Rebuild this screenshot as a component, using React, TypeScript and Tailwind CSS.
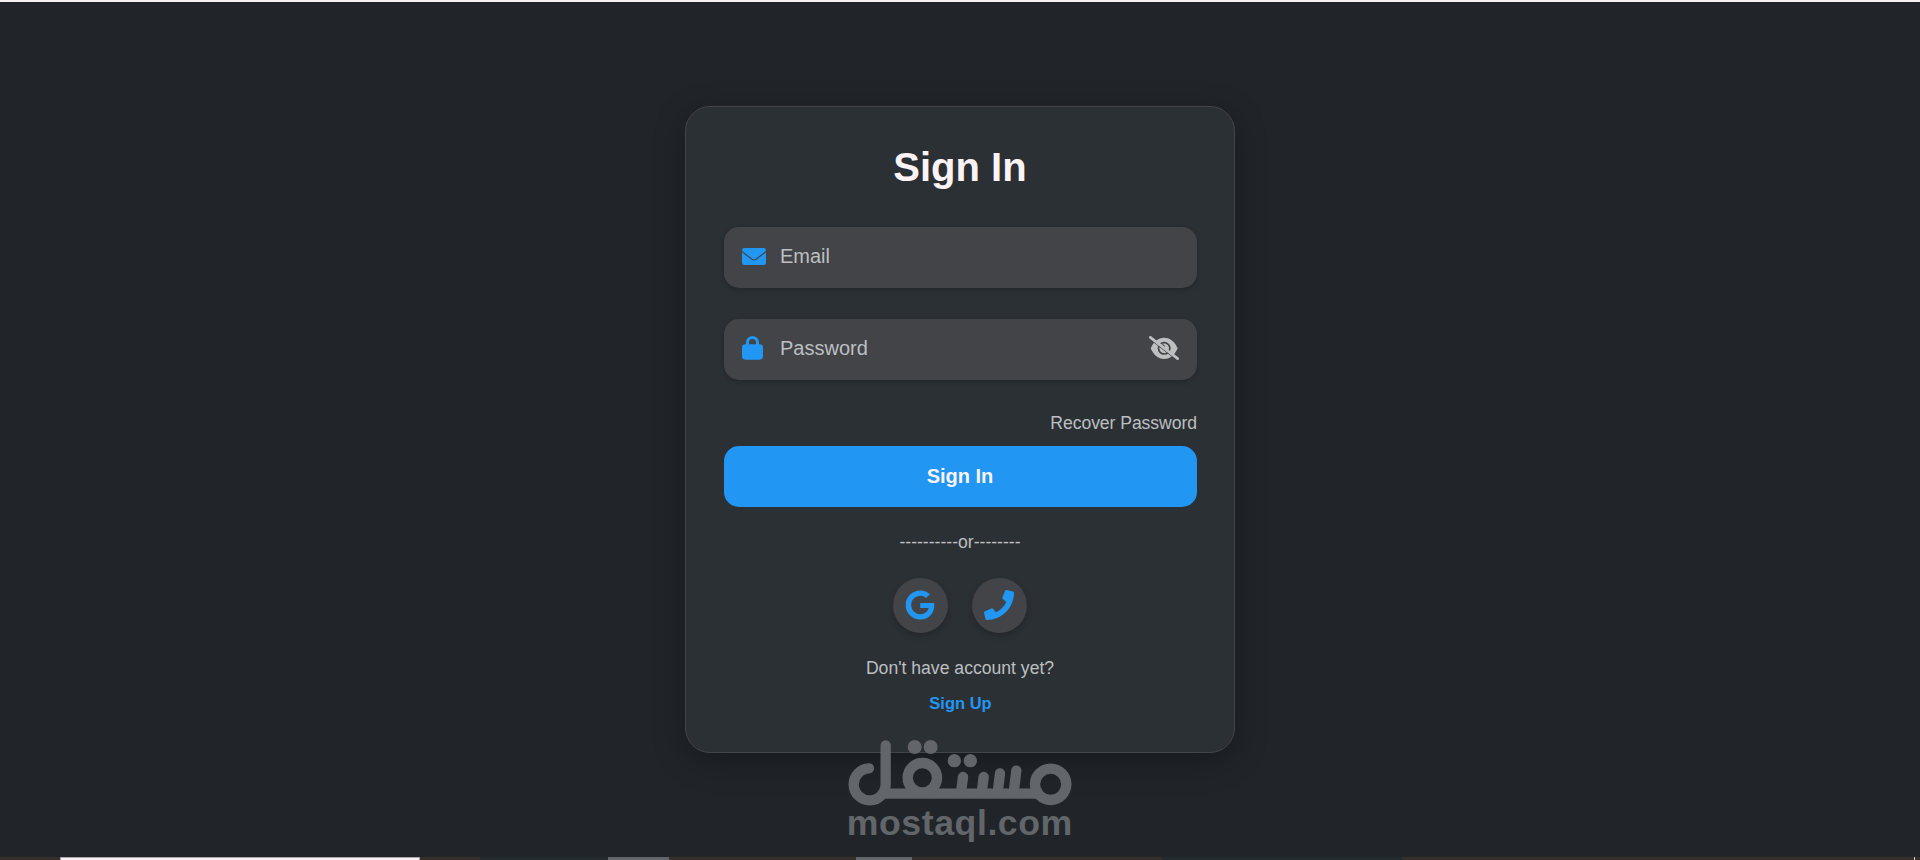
import type { ReactNode } from 'react';
import { FaGoogle, FaPhone } from 'react-icons/fa';

function MailIcon() {
    return (
        <svg className="h-[17px] w-6" viewBox="0 0 72 51" fill="none">
            <rect width="72" height="51" rx="7" fill="#2196f3" />
            <path d="M-1 10L30 34Q36 38 42 34L73 10" stroke="#424448" strokeWidth="3.5" />
        </svg>
    );
}

function LockIcon() {
    return (
        <svg className="h-6 w-[21px]" viewBox="0 0 63 72" fill="none">
            <rect y="25" width="63" height="46" rx="10" fill="#2196f3" />
            <path d="M16.5 28V19A15 14.5 0 0 1 46.5 19V28" stroke="#2196f3" strokeWidth="9" />
        </svg>
    );
}

function EyeSlashIcon() {
    return (
        <svg className="h-6 w-[30px]" viewBox="0 0 90 72" fill="none">
            <path d="M5 37C13 18 27 5 45.5 5S78 18 86 37C78 56 64 69 45.5 69S13 56 5 37Z" fill="#bdbfc1" />
            <circle cx="45.5" cy="37" r="17" stroke="#424448" strokeWidth="5" />
            <circle cx="41" cy="31" r="6" fill="#424448" />
            <path d="M0 7L84 73" stroke="#424448" strokeWidth="3" />
            <path d="M4 4L86 68" stroke="#bdbfc1" strokeWidth="8" strokeLinecap="round" />
        </svg>
    );
}

function Field({ icon, label, trailing }: { icon: ReactNode; label: string; trailing?: ReactNode }) {
    return (
        <div className="flex h-[61px] items-center rounded-[15px] bg-[#424448] px-[18px] pb-[3px] text-xl text-[#bdbfc1] shadow-[0_2px_5px_rgba(0,0,0,0.2)]">
            <span className="w-[38px]">{icon}</span>
            <span className="flex-1">{label}</span>
            {trailing}
        </div>
    );
}

function SocialButton({ children }: { children: ReactNode }) {
    return (
        <button className="flex h-[55px] w-[55px] items-center justify-center rounded-full bg-[#424448] pr-px pb-0.5 text-[30px] text-[#2196f3] shadow-[0_3px_6px_rgba(0,0,0,0.2)]">
            {children}
        </button>
    );
}

function Watermark() {
    return (
        <svg className="absolute top-[720px] left-[830px] h-[140px] w-[260px]" viewBox="0 0 780 420" fill="none">
            <g stroke="#626569" strokeWidth="31" strokeLinecap="round">
                <path d="M117 145A48 48 0 1 0 167 193V76" />
                <path d="M155 221H635" strokeLinecap="butt" />
                <circle cx="277" cy="173" r="44" />
                <circle cx="662" cy="193" r="47" />
                <path d="M399 171L393 218M461 171L455 218M510 160L503 218M559 152L551 218" />
            </g>
            <g fill="#626569">
                <circle cx="254" cy="81" r="21" />
                <circle cx="302" cy="81" r="21" />
                <circle cx="373" cy="122" r="20" />
                <circle cx="421" cy="122" r="20" />
                <text x="50" y="344" fontFamily="Liberation Sans, sans-serif" fontWeight="700" fontSize="107" textLength="677">
                    mostaql.com
                </text>
            </g>
        </svg>
    );
}

export default function App() {
    return (
        <div className="relative flex h-[860px] flex-col items-center overflow-hidden bg-[#212529] font-['Liberation_Sans',Arial,sans-serif] text-[17.6px] leading-5 text-[#bdbfc1]">
            <div className="h-0.5 w-full shrink-0 bg-[#f8f1f4]" />

            <main className="mt-[104px] flex h-[647px] w-[550px] shrink-0 flex-col rounded-[25px] border border-[#424549] bg-[#2b3034] pr-[37px] pl-[38px] shadow-[0_8px_32px_rgba(0,0,0,0.3)]">
                <h1 className="mt-[37px] pr-px text-center text-[40px] leading-[46px] font-bold text-[#fcf3f5]">Sign In</h1>

                <div className="mt-[37px] flex flex-col gap-[31px]">
                    <Field icon={<MailIcon />} label="Email" />
                    <Field icon={<LockIcon />} label="Password" trailing={<EyeSlashIcon />} />
                </div>

                <a className="mt-[33px] self-end tracking-[-0.06px]">Recover Password</a>
                <button className="mt-[13px] h-[61px] shrink-0 rounded-[15px] bg-[#2196f3] pr-px pb-0.5 text-xl font-bold text-[#fcf3f5]">Sign In</button>

                <p className="mt-[25px] pr-px text-center">----------or--------</p>

                <div className="mt-[26px] flex justify-center gap-6 pr-0.5">
                    <SocialButton>
                        <FaGoogle />
                    </SocialButton>
                    <SocialButton>
                        <FaPhone />
                    </SocialButton>
                </div>

                <p className="mt-[25px] pr-px text-center">Don't have account yet?</p>
                <a className="mt-[15px] text-center text-[16.5px] font-bold text-[#2196f3]">Sign Up</a>
            </main>

            {/* Bottom edge strip */}
            <div className="mt-auto flex h-[3px] w-full shrink-0 bg-[#352f2b]">
                <div className="ml-[60px] w-[360px] border border-b-0 border-[#a9a5a7] bg-[#f8f1f4]" />
                <div className="ml-[60px] w-32 bg-[#242b2f]" />
                <div className="w-[61px] bg-[#626569]" />
                <div className="ml-[187px] w-14 bg-[#626569]" />
                <div className="ml-[250px] w-[240px] bg-[#242b2f]" />
                <div className="ml-[512px] w-px bg-[#d6d0d2]" />
            </div>

            <Watermark />
        </div>
    );
}
